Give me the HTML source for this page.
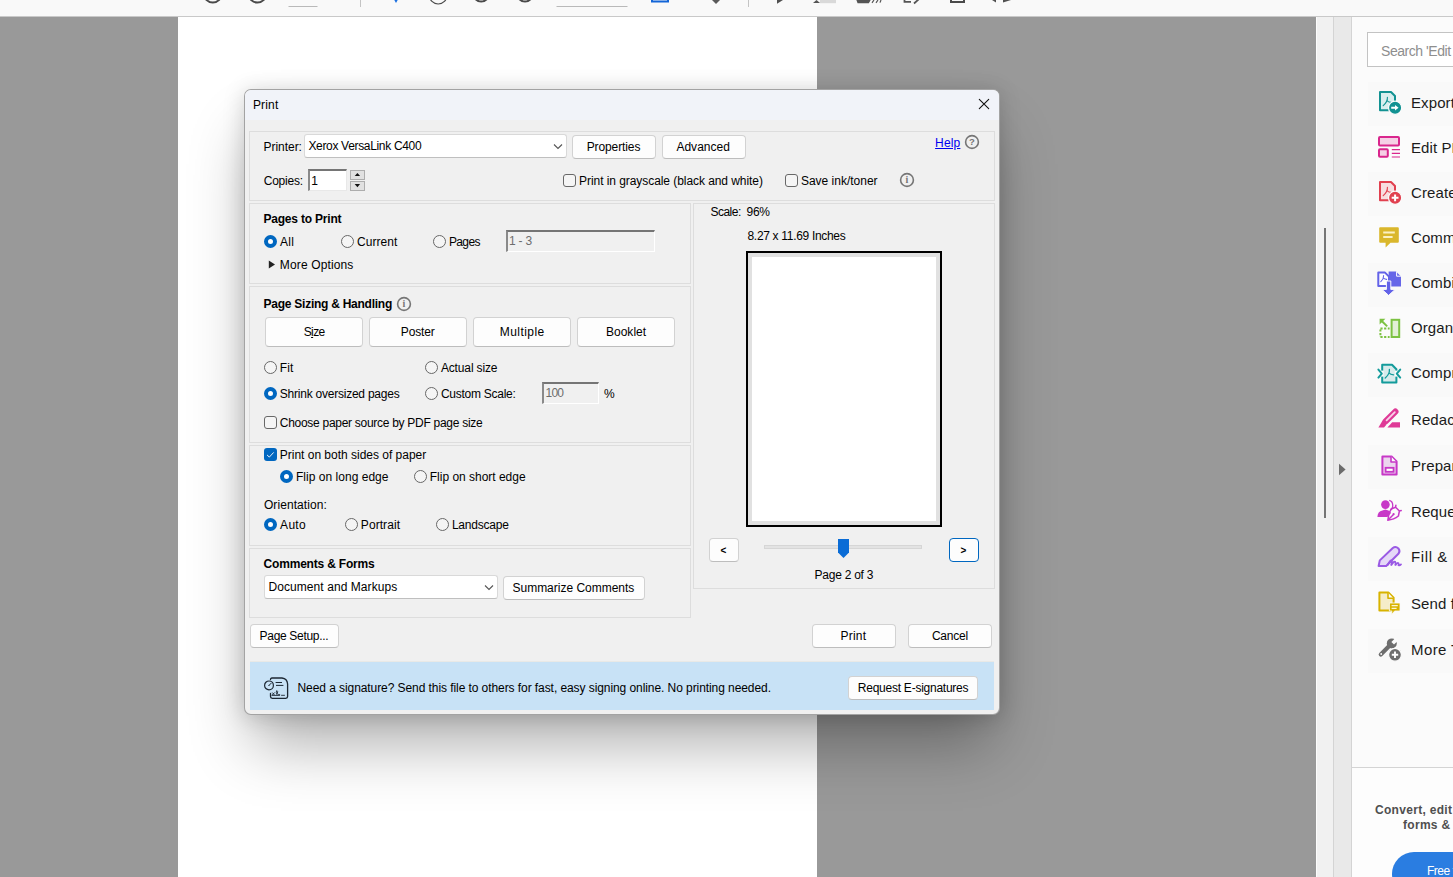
<!DOCTYPE html>
<html lang="en">
<head>
<meta charset="utf-8">
<title>Print</title>
<style>
*{box-sizing:border-box;margin:0;padding:0}
html,body{width:1453px;height:877px;overflow:hidden}
body{background:#999;font-family:"Liberation Sans",sans-serif;font-size:12px;color:#000;position:relative}
.abs,.t,.btn,.grp,.rad,.chk,.inp,.sel,.ico{position:absolute}
.t{white-space:nowrap;line-height:16px;height:16px;font-size:12px}
.b{font-weight:bold}
#toolbar{left:0;top:0;width:1453px;height:17px;background:#f9f9f9;border-bottom:1px solid #c9c9c9}
#docpage{left:178px;top:17px;width:639px;height:860px;background:#fff}
#vscroll{left:1316px;top:17px;width:17px;height:860px;background:#f1f1f1;border-left:1px solid #fcfcfc}
#collapse{left:1333px;top:17px;width:19px;height:860px;background:#e9e9e9;border-left:1px solid #d4d4d4;border-right:1px solid #d4d4d4}
#rpanel{left:1352px;top:17px;width:101px;height:860px;background:#fbfbfb}
#dlg{left:244px;top:89px;width:756px;height:626px;background:#f0f0f0;border:1px solid rgba(0,0,0,.32);border-radius:7px;box-shadow:0 38px 58px -8px rgba(0,0,0,.31),0 2px 21px rgba(0,0,0,.17);overflow:hidden}
#titlebar{background:#f1f3f9}
.grp{border:1px solid #dddddd}
.btn{background:#fdfdfd;border:1px solid #d2d2d2;border-bottom-color:#bdbdbd;border-radius:4px}
.rad{width:13px;height:13px;border-radius:50%;border:1px solid #686868;background:#f5f5f5}
.rad.on{border:4px solid #0067c0;background:#fff}
.chk{width:13px;height:13px;border-radius:3px;border:1px solid #686868;background:#f5f5f5}
.chk.on{border:none;background:#0067c0}
.inp{background:#fff;border:1px solid #e8e8e8;border-top:2px solid #757575;border-left:2px solid #8a8a8a}
.inp.dis{background:#f0f0f0;border-right-color:#fff;border-bottom-color:#fff}
.sel{background:#fff;border:1px solid #d9d9d9;border-bottom-color:#bfbfbf;border-radius:3px}
.ico{width:14px;height:14px;border-radius:50%;border:1.3px solid #6a6a6a;color:#5a5a5a;font-family:"Liberation Serif",serif;font-weight:bold;font-size:10px;line-height:11.5px;text-align:center}
.spin{width:15px;height:10px;background:#e1e1e1;border:1px solid #adadad}
.pt{white-space:nowrap;font-size:15px;line-height:20px;color:#1b1b1b}
</style>
</head>
<body>
<div id="toolbar" class="abs"></div>
<div id="docpage" class="abs"></div>
<div id="vscroll" class="abs"></div>
<div id="collapse" class="abs"></div>
<div id="rpanel" class="abs"></div>
<!--APPSTART-->
<!-- toolbar fragments (icons cut off by viewport top) -->
<svg class="abs" style="left:0;top:0" width="1316" height="16" viewBox="0 0 1316 16" fill="none">
  <g stroke="#4a4a4a" stroke-width="2">
    <circle cx="212.8" cy="-6" r="8.6"/>
    <circle cx="257.4" cy="-6" r="8.6"/>
    <circle cx="481.2" cy="-6.5" r="8"/>
    <circle cx="525" cy="-6.5" r="8"/>
  </g>
  <circle cx="438.2" cy="-4.8" r="8.8" stroke="#4a4a4a" stroke-width="1.2"/>
  <path d="M288.5 6.5 H317.5 M556.5 6.5 H627.5" stroke="#b9b9b9" stroke-width="1"/>
  <path d="M360.5 0 V7 M748.5 0 V7" stroke="#c4c4c4" stroke-width="1"/>
  <path d="M394.3 0 L396 3 L397.7 0Z" fill="#1a6fe0"/>
  <path d="M652 -2 V1.6 H668 V-2" stroke="#1466d8" stroke-width="2"/>
  <path d="M711 -1 L716 4 L721 -1Z" fill="#5a5a5a"/>
  <path d="M777 0 H783 L777 3.8Z" fill="#505050"/>
  <path d="M813 3 L816.5 0 L820 3Z" fill="#555"/><rect x="820" y="0" width="16" height="3.2" fill="#d9d9d9"/>
  <path d="M857 0 H870 L868.5 2.6 H858Z M872 2.8 L874 0 M876 2.8 L878 0 M880 2.6 L881 0" fill="#555" stroke="#555" stroke-width="1.2"/>
  <path d="M904.5 0 V1.8 H911 M914 3.5 L919 -1" stroke="#555" stroke-width="1.8"/>
  <path d="M951 -1 V2 H964 V-1" stroke="#4a4a4a" stroke-width="2"/>
  <path d="M992 0 L996 2.4 V0Z M1003 0 V2.4 L1011 0Z" fill="#505050"/>
</svg>

<!-- scrollbar + collapse handle -->
<div class="abs" style="left:1324px;top:228px;width:2px;height:290px;background:#757575"></div>
<svg class="abs" style="left:1338px;top:463px" width="9" height="13" viewBox="0 0 9 13"><path d="M1 0.8 L7.6 6.5 L1 12.2Z" fill="#6b6b6b"/></svg>

<!-- right tools panel -->
<div class="abs" style="left:1367px;top:32px;width:100px;height:35px;background:#fff;border:1px solid #c3c3c3"></div>
<div class="abs pt" style="left:1381px;top:41px;font-size:14px;color:#8e8e8e;letter-spacing:-0.45px">Search 'Edit PDF'</div>
<div class="abs" style="left:1352px;top:767px;width:101px;height:1px;background:#d4d4d4"></div>
<div class="abs" style="left:1352px;top:768px;width:101px;height:109px;background:#fdfdfd"></div>
<div class="abs" style="left:1368px;top:82px;width:90px;height:44px;background:#f9f9f9"></div>
<div class="abs" style="left:1368px;top:172px;width:90px;height:44px;background:#f9f9f9"></div>
<div class="abs" style="left:1368px;top:263px;width:90px;height:44px;background:#f9f9f9"></div>
<div class="abs" style="left:1368px;top:353px;width:90px;height:44px;background:#f9f9f9"></div>
<div class="abs" style="left:1368px;top:445px;width:90px;height:44px;background:#f9f9f9"></div>
<div class="abs" style="left:1368px;top:537px;width:90px;height:44px;background:#f9f9f9"></div>
<div class="abs" style="left:1368px;top:629px;width:90px;height:44px;background:#f9f9f9"></div>
<div class="abs pt" style="left:1411px;top:93px;letter-spacing:0.1px">Export PDF</div>
<div class="abs pt" style="left:1411px;top:138px;letter-spacing:0.1px">Edit PDF</div>
<div class="abs pt" style="left:1411px;top:183px;letter-spacing:0.1px">Create PDF</div>
<div class="abs pt" style="left:1411px;top:228px;letter-spacing:0.1px">Comment</div>
<div class="abs pt" style="left:1411px;top:273px;letter-spacing:0.1px">Combine Files</div>
<div class="abs pt" style="left:1411px;top:318px;letter-spacing:0.1px">Organize Pages</div>
<div class="abs pt" style="left:1411px;top:363px;letter-spacing:0.1px">Compress PDF</div>
<div class="abs pt" style="left:1411px;top:410px;letter-spacing:0.1px">Redact</div>
<div class="abs pt" style="left:1411px;top:456px;letter-spacing:0.1px">Prepare Form</div>
<div class="abs pt" style="left:1411px;top:502px;letter-spacing:0.1px">Request E-signatures</div>
<div class="abs pt" style="left:1411px;top:547px;letter-spacing:0.6px">Fill &amp; Sign</div>
<div class="abs pt" style="left:1411px;top:594px;letter-spacing:0.1px">Send for Comments</div>
<div class="abs pt" style="left:1411px;top:640px;letter-spacing:0.4px">More Tools</div>
<svg class="abs" style="left:1375px;top:88px" width="28" height="28" viewBox="0 0 28 28" fill="none"><path d="M5 4 H16 L20 8 V22.2 H5Z" fill="#d9eeee" stroke="#129292" stroke-width="2" stroke-linejoin="round"/><path d="M12.399999999999999 9.3 Q12.799999999999999 13.700000000000001 8.2 17.6 M12.2 12.700000000000001 Q13.2 14.200000000000001 16.1 14.4" stroke="#129292" stroke-width="1.15" fill="none" stroke-linecap="round"/><circle cx="20.1" cy="19.8" r="6.6" fill="#129292" stroke="#fbfbfb" stroke-width="1.2"/><path d="M16.2 18.8 H20 V17 L23.6 19.8 L20 22.6 V20.8 H16.2Z" fill="#fff"/></svg>
<svg class="abs" style="left:1375px;top:131px" width="28" height="28" viewBox="0 0 28 28" fill="none"><rect x="4" y="6" width="20" height="8.6" rx="1" stroke="#d9268d" stroke-width="2" fill="#f5d0e5"/><rect x="4" y="18.2" width="8.8" height="7.6" rx="1" stroke="#d9268d" stroke-width="2" fill="#f5d0e5"/><path d="M16.8 18.6 H25 M16.8 22.3 H25 M16.8 26 H25" stroke="#d9268d" stroke-width="1.2"/></svg>
<svg class="abs" style="left:1375px;top:178px" width="28" height="28" viewBox="0 0 28 28" fill="none"><path d="M5 4 H16 L20 8 V22.2 H5Z" fill="#f7dde0" stroke="#e1404f" stroke-width="2" stroke-linejoin="round"/><path d="M12.399999999999999 9.3 Q12.799999999999999 13.700000000000001 8.2 17.6 M12.2 12.700000000000001 Q13.2 14.200000000000001 16.1 14.4" stroke="#e1404f" stroke-width="1.15" fill="none" stroke-linecap="round"/><circle cx="20.1" cy="19.8" r="6.6" fill="#e1404f" stroke="#fbfbfb" stroke-width="1.2"/><path d="M16.7 19.8 H23.5 M20.1 16.4 V23.2" stroke="#fff" stroke-width="2"/></svg>
<svg class="abs" style="left:1375px;top:223px" width="28" height="28" viewBox="0 0 28 28" fill="none"><path d="M5.2 4.2 H22.8 Q23.8 4.2 23.8 5.2 V18.8 Q23.8 19.8 22.8 19.8 H15.5 L10.6 24.4 V19.8 H5.2 Q4.2 19.8 4.2 18.8 V5.2 Q4.2 4.2 5.2 4.2Z" fill="#dab72c"/><path d="M8.2 9.6 H19.8 M8.2 14 H17.6" stroke="#fbf1c4" stroke-width="2"/></svg>
<svg class="abs" style="left:1375px;top:267px" width="28" height="28" viewBox="0 0 28 28" fill="none"><path d="M3.3 5.6 H10 L14 9.6 V19 H3.3Z" stroke="#6363e8" stroke-width="2" fill="#fff" stroke-linejoin="round"/><path d="M8.6 8.6 Q8.9 11.6 5.8 14.6 M8.5 11 Q9.3 12.2 11.6 12.4" stroke="#6363e8" stroke-width="1.1" fill="none" stroke-linecap="round"/><path d="M13.6 4.6 H21 L26 9.6 V19.6 H13.6Z" fill="#6666e8"/><path d="M21.6 4.8 V9.2 H25.8" stroke="#fff" stroke-width="1"/><path d="M11.4 14 H15.8 V22.4 H20.2 L13.6 28.4 L7 22.4 H11.4Z" fill="#6363e8" stroke="#fbfbfb" stroke-width="1"/></svg>
<svg class="abs" style="left:1375px;top:315px" width="28" height="28" viewBox="0 0 28 28" fill="none"><rect x="16.6" y="4.8" width="7.6" height="17.2" stroke="#7cc242" stroke-width="2" fill="#e2f0d6"/><path d="M5.4 13.4 H14.6 M5.4 22 H14.6 M5.4 14.4 V22" stroke="#7cc242" stroke-width="2" stroke-dasharray="2.2 1.5"/><path d="M4.6 3.8 H10.4 L4.6 9.6Z" fill="#7cc242"/><path d="M7 6.2 L12.2 11.4" stroke="#7cc242" stroke-width="2"/></svg>
<svg class="abs" style="left:1375px;top:360px" width="28" height="28" viewBox="0 0 28 28" fill="none"><path d="M7.2 4.8 H17 L21.4 9.2 V22.4 H7.2Z" fill="#d7ebeb" stroke="#139b9b" stroke-width="2" stroke-linejoin="round"/><path d="M14.4 9.4 Q14.8 14 10.2 18 M14.2 13 Q15.2 14.6 18.6 14.8" stroke="#139b9b" stroke-width="1.3" fill="none" stroke-linecap="round"/><rect x="5.8" y="10.6" width="3" height="6" fill="#fbfbfb"/><rect x="19.8" y="10.6" width="3" height="6" fill="#fbfbfb"/><path d="M3.4 9.6 L6.8 13.6 L3.4 17.6 M25.2 9.6 L21.8 13.6 L25.2 17.6" stroke="#139b9b" stroke-width="2" stroke-linecap="round" stroke-linejoin="round"/></svg>
<svg class="abs" style="left:1375px;top:405px" width="28" height="28" viewBox="0 0 28 28" fill="none"><path d="M20.4 6.6 L10.6 16.4" stroke="#df3a97" stroke-width="6.2" stroke-linecap="round"/><path d="M19.8 7.2 L11.6 15.4" stroke="#f9d3e8" stroke-width="1.8" stroke-linecap="round"/><path d="M7.4 15.8 L11.4 19.8 L9 22.4 H3.4Z" fill="#df3a97"/><path d="M12.4 22.4 L17.2 17.2 H25 V22.4Z" fill="#df3a97"/></svg>
<svg class="abs" style="left:1375px;top:452px" width="28" height="28" viewBox="0 0 28 28" fill="none"><path d="M7.4 4.4 H16.6 L21.6 9.4 V22.6 H7.4Z" fill="#ecd6ee" stroke="#c738c7" stroke-width="2" stroke-linejoin="round"/><path d="M16 4.6 V10 H21.4" fill="#fbfbfb" stroke="#c738c7" stroke-width="1.6" stroke-linejoin="round"/><rect x="10.6" y="15.8" width="8" height="4" stroke="#c738c7" stroke-width="1.8" fill="#fff"/></svg>
<svg class="abs" style="left:1375px;top:496px" width="28" height="28" viewBox="0 0 28 28" fill="none"><circle cx="10.4" cy="8.6" r="4.3" fill="#c738c7"/><path d="M2.4 21 Q2.6 15.6 7.4 14.6 L10.4 13.4 L13.4 14.6 Q15.4 15.2 16 17 L12.4 21Z" fill="#c738c7"/><path d="M14.2 4.4 Q18.4 5.4 17.6 10.8 Q17 13 16 14" stroke="#c738c7" stroke-width="1.3"/><path d="M20.6 11.2 L24.4 15 L26.2 14.6 M20.6 11.2 L20.9 9.2 M20.6 11.2 L16 13 Q13.2 18 12.8 24.2 Q19 23.6 23.4 20 L24.4 15 M12.8 24.2 L18 19" stroke="#c738c7" stroke-width="1.5" stroke-linejoin="round" stroke-linecap="round"/><circle cx="18.6" cy="18.2" r="1.1" fill="#c738c7"/></svg>
<svg class="abs" style="left:1375px;top:544px" width="28" height="28" viewBox="0 0 28 28" fill="none"><path d="M17.8 4 Q20.6 1.8 23.4 4.4 Q25.6 7.2 23.4 9.8 L11.2 22 H3.6 L4.8 16.4Z" stroke="#9a5ae4" stroke-width="2" fill="#e5d8f7" stroke-linejoin="round"/><path d="M12.6 21 Q15.8 15 16.8 16.8 Q17.2 18.4 16 21.6 Q18.8 16.8 20.2 17.8 Q21 18.8 20.2 21.6 Q22.2 18.4 23.4 19.2 Q24 20.2 23.6 21.2 Q24.6 21.8 26 20.4" stroke="#9a5ae4" stroke-width="1.8" stroke-linecap="round"/></svg>
<svg class="abs" style="left:1375px;top:589px" width="28" height="28" viewBox="0 0 28 28" fill="none"><path d="M4.4 3.6 H13.6 L18.6 8.6 V21.6 H4.4Z" fill="#f5edc8" stroke="#d8b300" stroke-width="2" stroke-linejoin="round"/><path d="M13 3.8 V9.2 H18.4" fill="#fbfbfb" stroke="#d8b300" stroke-width="1.6" stroke-linejoin="round"/><path d="M14.4 14 H25 V22 H19.6 L16.8 25.4 V22 H14.4Z" fill="#d8b300" stroke="#fbfbfb" stroke-width="0.8"/><path d="M16.6 16.7 H22.8 M16.6 19.3 H21.6" stroke="#fdf6d0" stroke-width="1.2"/></svg>
<svg class="abs" style="left:1375px;top:635px" width="28" height="28" viewBox="0 0 28 28" fill="none"><path d="M5.8 19.4 L14.4 10.8" stroke="#6e6e6e" stroke-width="4.2" stroke-linecap="round"/><circle cx="16.8" cy="8.4" r="5" fill="#6e6e6e"/><path d="M16.4 7 L20.6 2.8 L23.2 5.4 L19 9.6Z" fill="#fbfbfb"/><circle cx="6.2" cy="19" r="0.9" fill="#fbfbfb"/><circle cx="20" cy="19.8" r="6.4" fill="#6e6e6e" stroke="#fbfbfb" stroke-width="1.2"/><path d="M16.8 19.8 H23.2 M20 16.6 V23" stroke="#fff" stroke-width="1.9"/></svg>

<div class="abs pt b" style="left:1375px;top:802px;font-size:12px;line-height:16px;color:#4f4f4f;letter-spacing:0.3px">Convert, edit and e-sign PDF</div>
<div class="abs pt b" style="left:1403px;top:817px;font-size:12px;line-height:16px;color:#4f4f4f;letter-spacing:0.3px">forms &amp; agreements</div>
<div class="abs" style="left:1392px;top:852px;width:160px;height:44px;border-radius:22px;background:#2a7de1"></div>
<div class="abs pt" style="left:1427px;top:863px;font-size:12px;line-height:16px;letter-spacing:-0.5px;color:#fff">Free trial</div>
<!--APPEND-->
<div id="dlg" class="abs">
<div id="c" class="abs" style="left:-245px;top:-90px;width:1453px;height:877px">
  <div id="titlebar" class="abs" style="left:245px;top:90px;width:754px;height:30px"></div>
  <svg class="abs" style="left:978px;top:98px" width="12" height="12" viewBox="0 0 12 12"><path d="M1.3 1.3 L10.7 10.7 M10.7 1.3 L1.3 10.7" stroke="#111" stroke-width="1.1" fill="none" stroke-linecap="round"/></svg>

  <div class="grp" style="left:249px;top:131px;width:746px;height:70px"></div>
  <div class="sel" style="left:304px;top:134px;width:263px;height:24px"></div>
  <svg class="abs" style="left:553px;top:143px" width="10" height="7" viewBox="0 0 10 7"><path d="M1 1.5 L5 5.5 L9 1.5" stroke="#555" stroke-width="1.1" fill="none"/></svg>
  <div class="btn" style="left:572px;top:135px;width:84px;height:24px"></div>
  <div class="btn" style="left:662px;top:135px;width:84px;height:24px"></div>
  <svg class="abs" style="left:964px;top:134px" width="16" height="16" viewBox="0 0 16 16"><circle cx="8" cy="8" r="6.4" stroke="#767676" stroke-width="1.6" fill="none"/><text x="8" y="11.3" text-anchor="middle" font-family="'Liberation Sans',serif" font-weight="bold" font-size="9.5" fill="#757575">?</text></svg>

  <div class="inp" style="left:308px;top:169px;width:39px;height:22px"></div>
  <div class="abs spin" style="left:350px;top:170px"><svg class="abs" style="left:0;top:0" width="13" height="8" viewBox="0 0 13 8"><path d="M3.7 5 L6.4 1.9 L9.1 5Z" fill="#111"/></svg></div>
  <div class="abs spin" style="left:350px;top:181px"><svg class="abs" style="left:0;top:0" width="13" height="8" viewBox="0 0 13 8"><path d="M3.7 2.1 L9.1 2.1 L6.4 5.2Z" fill="#111"/></svg></div>
  <div class="chk" style="left:563px;top:174px"></div>
  <div class="chk" style="left:785px;top:174px"></div>
  <svg class="abs" style="left:899px;top:172px" width="16" height="16" viewBox="0 0 16 16"><circle cx="8" cy="8" r="6.4" stroke="#767676" stroke-width="1.6" fill="none"/><text x="8" y="11.3" text-anchor="middle" font-family="'Liberation Serif',serif" font-weight="bold" font-size="10" fill="#757575">i</text></svg>

  <div class="grp" style="left:249px;top:203px;width:442px;height:81px"></div>
  <div class="rad on" style="left:264px;top:235px"></div>
  <div class="rad" style="left:341px;top:235px"></div>
  <div class="rad" style="left:433px;top:235px"></div>
  <div class="inp dis" style="left:506px;top:230px;width:149px;height:22px"></div>
  <svg class="abs" style="left:268px;top:260px" width="8" height="9" viewBox="0 0 8 9"><path d="M0.8 0.5 L7 4.5 L0.8 8.5Z" fill="#222"/></svg>

  <div class="grp" style="left:249px;top:286px;width:442px;height:157px"></div>
  <svg class="abs" style="left:396px;top:296px" width="16" height="16" viewBox="0 0 16 16"><circle cx="8" cy="8" r="6.4" stroke="#767676" stroke-width="1.6" fill="none"/><text x="8" y="11.3" text-anchor="middle" font-family="'Liberation Serif',serif" font-weight="bold" font-size="10" fill="#757575">i</text></svg>
  <div class="btn" style="left:265px;top:317px;width:98px;height:30px"></div>
  <div class="btn" style="left:369px;top:317px;width:98px;height:30px"></div>
  <div class="btn" style="left:473px;top:317px;width:98px;height:30px"></div>
  <div class="btn" style="left:577px;top:317px;width:98px;height:30px"></div>
  <div class="rad" style="left:264px;top:361px"></div>
  <div class="rad" style="left:425px;top:361px"></div>
  <div class="rad on" style="left:264px;top:387px"></div>
  <div class="rad" style="left:425px;top:387px"></div>
  <div class="inp dis" style="left:542px;top:382px;width:57px;height:22px"></div>
  <div class="chk" style="left:264px;top:416px"></div>

  <div class="grp" style="left:249px;top:445px;width:442px;height:101px"></div>
  <div class="chk on" style="left:264px;top:448px"><svg width="13" height="13" viewBox="0 0 13 13"><path d="M3 6.9 L5.3 9.1 L9.7 4.4" stroke="#e6f0fa" stroke-width="1" fill="none"/></svg></div>
  <div class="rad on" style="left:280px;top:470px"></div>
  <div class="rad" style="left:414px;top:470px"></div>
  <div class="rad on" style="left:264px;top:518px"></div>
  <div class="rad" style="left:345px;top:518px"></div>
  <div class="rad" style="left:436px;top:518px"></div>

  <div class="grp" style="left:249px;top:548px;width:442px;height:70px"></div>
  <div class="sel" style="left:264px;top:575px;width:234px;height:24px"></div>
  <svg class="abs" style="left:484px;top:584px" width="10" height="7" viewBox="0 0 10 7"><path d="M1 1.5 L5 5.5 L9 1.5" stroke="#555" stroke-width="1.1" fill="none"/></svg>
  <div class="btn" style="left:503px;top:576px;width:142px;height:24px"></div>

  <div class="grp" style="left:693px;top:203px;width:302px;height:386px"></div>
  <div class="abs" style="left:746px;top:251px;width:196px;height:276px;border:2px solid #000;background:#e1e1e1"></div>
  <div class="abs" style="left:752px;top:257px;width:184px;height:264px;background:#fff"></div>
  <div class="btn" style="left:709px;top:538px;width:30px;height:24px"></div>
  <div class="btn" style="left:949px;top:538px;width:30px;height:24px;border-color:#0067c0"></div>
  <div class="abs" style="left:764px;top:545px;width:158px;height:4px;background:#e3e3e3;border:1px solid #d6d6d6"></div>
  <svg class="abs" style="left:838px;top:539px" width="11" height="19" viewBox="0 0 11 19"><path d="M0 0 H11 V13.5 L5.5 19 L0 13.5 Z" fill="#0a6cd6"/></svg>

  <div class="btn" style="left:250px;top:624px;width:89px;height:24px"></div>
  <div class="btn" style="left:812px;top:624px;width:84px;height:24px"></div>
  <div class="btn" style="left:908px;top:624px;width:84px;height:24px"></div>

  <div class="abs" style="left:250px;top:661px;width:744px;height:49px;background:#c8e2f6;border-top:1px solid #e9e9e6"></div>
  <svg class="abs" style="left:262px;top:674px" width="28" height="28" viewBox="0 0 28 28" fill="none" stroke="#1c2733" stroke-width="1.3" stroke-linecap="round" stroke-linejoin="round">
    <path d="M8.5 5.5 Q8.5 4 10 4 H20 Q25.2 4.6 25.6 10 V22.5 Q25.6 24.3 23.8 24.3 H10.3 Q8.5 24.3 8.5 22.5 V19.5"/>
    <circle cx="7" cy="11.4" r="4.4" stroke-width="1.2"/>
    <path d="M7 11.4 L9.2 9.2 M7 11.4 H7.1" stroke-width="1"/>
    <path d="M14 8.5 H19.6 M14.4 11.4 H21" stroke-width="1"/>
    <path d="M10.5 18.8 L12.3 20.8 M12.3 18.8 L10.5 20.8 M10 21.4 H17.5 M15 20.8 Q13.4 17.5 14.8 16.6 Q16.2 17 15.4 19.4 Q16 20.8 17.8 20.8 M19.5 21.3 H22.5" stroke-width="0.9"/>
  </svg>
  <div class="btn" style="left:848px;top:676px;width:130px;height:24px"></div>
<div class="t" style="left:252.9px;top:97px;letter-spacing:0.163px;">Print</div>
<div class="t" style="left:263.6px;top:139px;letter-spacing:-0.048px;">Printer:</div>
<div class="t" style="left:308.4px;top:138px;letter-spacing:-0.325px;">Xerox VersaLink C400</div>
<div class="t" style="left:586.7px;top:139px;letter-spacing:-0.110px;">Properties</div>
<div class="t" style="left:676.4px;top:139px;letter-spacing:0.028px;">Advanced</div>
<div class="t" style="left:935.1px;top:135px;letter-spacing:0.153px;color:#0000f0;text-decoration:underline">Help</div>
<div class="t" style="left:263.7px;top:173px;letter-spacing:-0.213px;">Copies:</div>
<div class="t" style="left:311.2px;top:173px;letter-spacing:0.000px;">1</div>
<div class="t" style="left:579.1px;top:173px;letter-spacing:-0.064px;">Print in grayscale (black and white)</div>
<div class="t" style="left:800.9px;top:173px;letter-spacing:-0.001px;">Save ink/toner</div>
<div class="t b" style="left:263.4px;top:211px;letter-spacing:-0.192px;">Pages to Print</div>
<div class="t" style="left:280.1px;top:234px;letter-spacing:0.185px;">All</div>
<div class="t" style="left:357.1px;top:234px;letter-spacing:0.026px;">Current</div>
<div class="t" style="left:448.9px;top:234px;letter-spacing:-0.606px;">Pages</div>
<div class="t" style="left:509.0px;top:233px;letter-spacing:-0.203px;color:#6d6d6d">1 - 3</div>
<div class="t" style="left:279.8px;top:257px;letter-spacing:0.139px;">More Options</div>
<div class="t b" style="left:263.6px;top:296px;letter-spacing:-0.255px;">Page Sizing &amp; Handling</div>
<div class="t" style="left:303.7px;top:324px;letter-spacing:-0.619px;">S<u>i</u>ze</div>
<div class="t" style="left:400.8px;top:324px;letter-spacing:-0.165px;">Poster</div>
<div class="t" style="left:499.8px;top:324px;letter-spacing:0.430px;">Multiple</div>
<div class="t" style="left:605.9px;top:324px;letter-spacing:0.038px;">Booklet</div>
<div class="t" style="left:279.8px;top:360px;letter-spacing:0.119px;">Fit</div>
<div class="t" style="left:440.9px;top:360px;letter-spacing:-0.139px;">Actual size</div>
<div class="t" style="left:279.8px;top:386px;letter-spacing:-0.233px;">Shrink oversized pages</div>
<div class="t" style="left:440.9px;top:386px;letter-spacing:-0.256px;">Custom Scale:</div>
<div class="t" style="left:545.5px;top:385px;letter-spacing:-0.777px;color:#6d6d6d">100</div>
<div class="t" style="left:603.9px;top:386px;letter-spacing:0.000px;">%</div>
<div class="t" style="left:279.8px;top:415px;letter-spacing:-0.283px;">Choose paper source by PDF page size</div>
<div class="t" style="left:279.8px;top:447px;letter-spacing:-0.013px;">Print on both sides of paper</div>
<div class="t" style="left:296.0px;top:469px;letter-spacing:0.025px;">Flip on long edge</div>
<div class="t" style="left:429.8px;top:469px;letter-spacing:-0.015px;">Flip on short edge</div>
<div class="t" style="left:263.9px;top:497px;letter-spacing:0.088px;">Orientation:</div>
<div class="t" style="left:280.1px;top:517px;letter-spacing:0.278px;">Auto</div>
<div class="t" style="left:360.8px;top:517px;letter-spacing:0.077px;">Portrait</div>
<div class="t" style="left:451.9px;top:517px;letter-spacing:-0.213px;">Landscape</div>
<div class="t b" style="left:263.6px;top:556px;letter-spacing:-0.196px;">Comments &amp; Forms</div>
<div class="t" style="left:268.5px;top:579px;letter-spacing:0.070px;">Document and Markups</div>
<div class="t" style="left:512.5px;top:580px;letter-spacing:-0.013px;">Summarize Comments</div>
<div class="t" style="left:710.4px;top:204px;letter-spacing:-0.493px;">Scale:</div>
<div class="t" style="left:746.5px;top:204px;letter-spacing:-0.277px;">96%</div>
<div class="t" style="left:747.5px;top:228px;letter-spacing:-0.314px;">8.27 x 11.69 Inches</div>
<div class="t" style="left:720.4px;top:543px;letter-spacing:0.000px;font-size:10px;font-weight:bold">&lt;</div>
<div class="t" style="left:960.4px;top:543px;letter-spacing:0.000px;font-size:10px;font-weight:bold">&gt;</div>
<div class="t" style="left:814.6px;top:567px;letter-spacing:-0.254px;">Page 2 of 3</div>
<div class="t" style="left:259.6px;top:628px;letter-spacing:-0.318px;">Page Setup...</div>
<div class="t" style="left:840.6px;top:628px;letter-spacing:0.182px;">Print</div>
<div class="t" style="left:931.9px;top:628px;letter-spacing:-0.227px;">Cancel</div>
<div class="t" style="left:297.5px;top:680px;letter-spacing:-0.074px;">Need a signature? Send this file to others for fast, easy signing online. No printing needed.</div>
<div class="t" style="left:857.8px;top:680px;letter-spacing:-0.245px;">Request E-signatures</div>
</div>
</div>
</body>
</html>
